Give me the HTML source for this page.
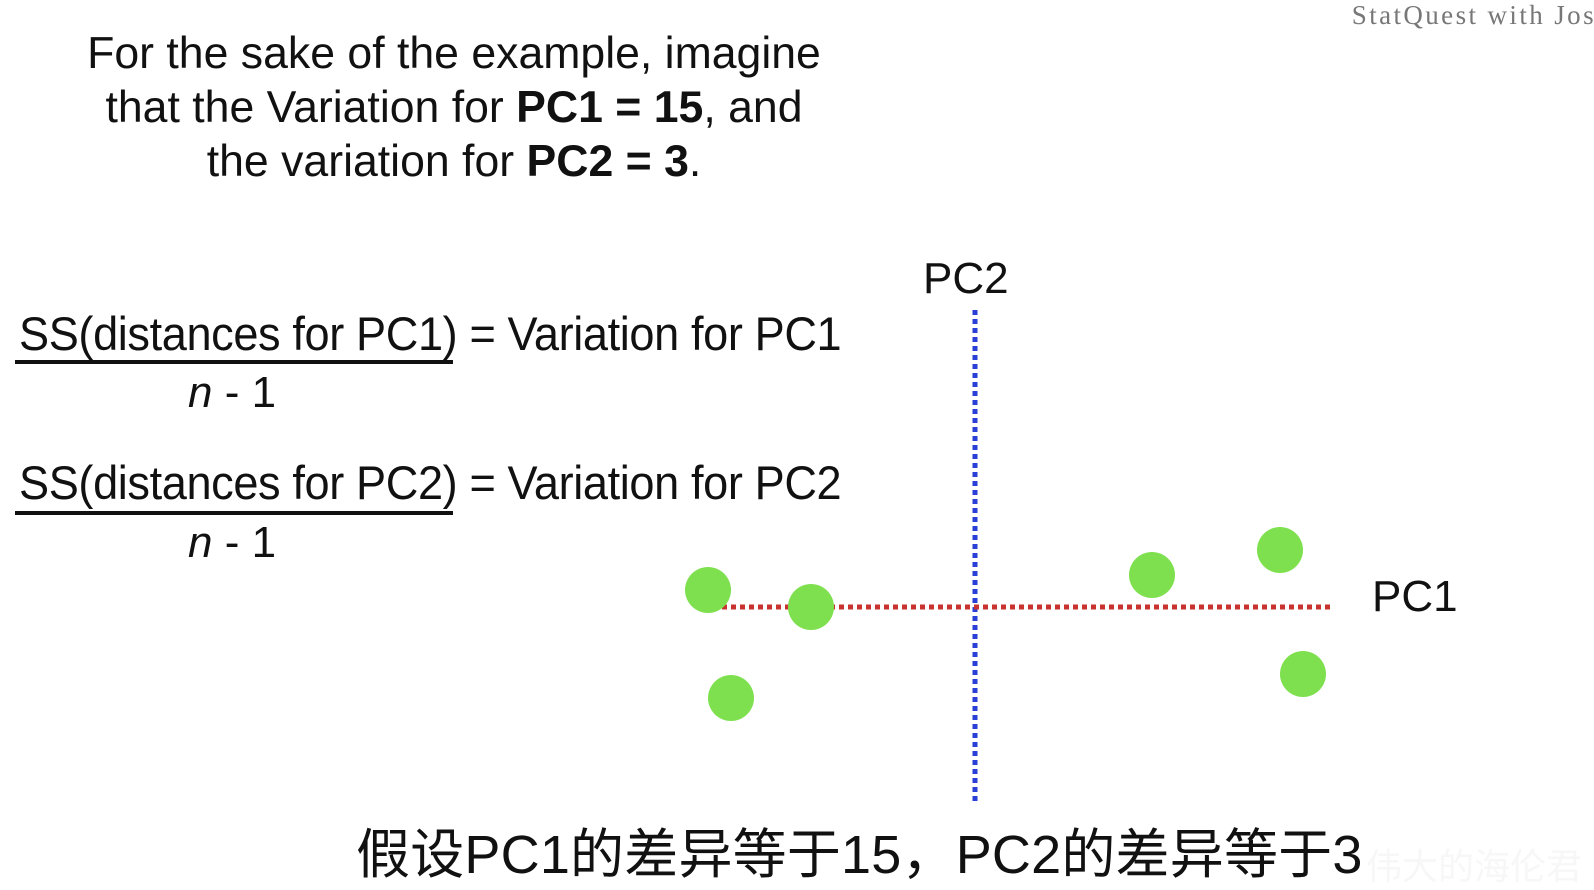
<!DOCTYPE html>
<html><head><meta charset="utf-8"><style>
html,body{margin:0;padding:0;background:#fff;}
body{width:1594px;height:888px;position:relative;overflow:hidden;font-family:"Liberation Sans","Noto Sans CJK SC",sans-serif;color:#111;}
.t{position:absolute;white-space:nowrap;}
.top{left:0;width:908px;text-align:center;font-size:44.6px;line-height:54px;top:27px;}
.f{font-size:47px;transform:scaleX(0.96);transform-origin:0 0;letter-spacing:-0.4px;}
.n{font-size:44px;}
.bar{position:absolute;left:15px;width:438px;height:4px;background:#111;}
</style></head><body>
<div class="t" style="right:-2px;top:0px;font-family:'Liberation Serif',serif;font-size:27px;letter-spacing:2.4px;color:#777;">StatQuest with Jos</div>
<div class="t top">For the sake of the example, imagine<br>that the Variation for <b>PC1 = 15</b>, and<br>the variation for <b>PC2 = 3</b>.</div>

<div class="t f" style="left:19px;top:306px;">SS(distances for PC1) = Variation for PC1</div>
<div class="bar" style="top:360px;"></div>
<div class="t n" style="left:188px;top:368px;"><i>n</i> - 1</div>

<div class="t f" style="left:19px;top:455px;">SS(distances for PC2) = Variation for PC2</div>
<div class="bar" style="top:511px;"></div>
<div class="t n" style="left:188px;top:518px;"><i>n</i> - 1</div>

<svg width="1594" height="888" style="position:absolute;left:0;top:0;">
<line x1="975" y1="310" x2="975" y2="805" stroke="#2a3fd6" stroke-width="5" stroke-dasharray="5,4"/>
<line x1="722" y1="607" x2="1334" y2="607" stroke="#c8332f" stroke-width="5" stroke-dasharray="5,4"/>
<g fill="#7ee04e">
<circle cx="708" cy="590" r="23"/><circle cx="811" cy="607" r="23"/><circle cx="731" cy="698" r="23"/>
<circle cx="1152" cy="575" r="23"/><circle cx="1280" cy="550" r="23"/><circle cx="1303" cy="674" r="23"/>
</g>
</svg>
<div class="t" style="left:923px;top:254px;font-size:44px;">PC2</div>
<div class="t" style="left:1372px;top:572px;font-size:44px;">PC1</div>

<div class="t" style="left:356px;top:810px;font-size:54px;letter-spacing:0.2px;">假设PC1的差异等于15，PC2的差异等于3</div>
<div class="t" style="left:1366px;top:838px;font-size:36px;color:#f7f7f7;">伟大的海伦君</div>
</body></html>
